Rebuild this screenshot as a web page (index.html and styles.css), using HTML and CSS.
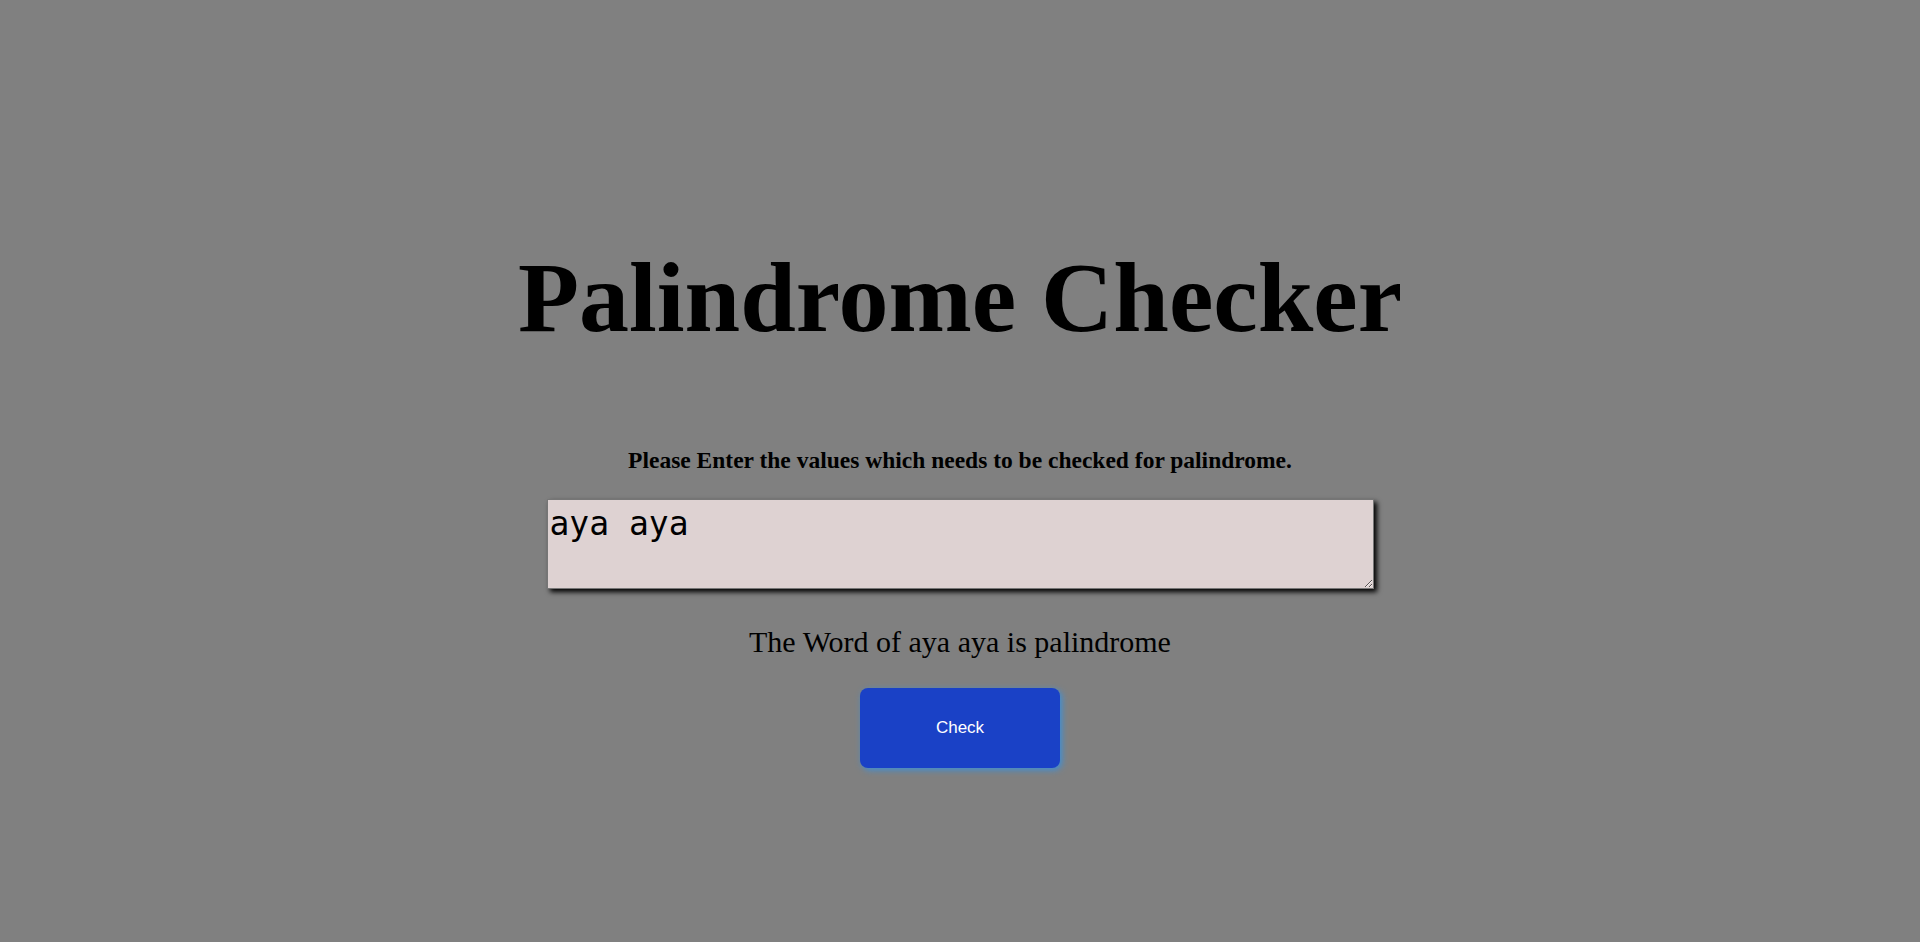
FILE: index.html
```html
<!DOCTYPE html>
<html>
<head>
<meta charset="utf-8">
<title>Palindrome Checker</title>
<link rel="stylesheet" href="styles.css">
</head>
<body>
<main class="page">
  <h1 class="title">Palindrome Checker</h1>
  <p class="prompt">Please Enter the values which needs to be checked for palindrome.</p>
  <textarea class="input">aya aya</textarea>
  <p class="result">The Word of aya aya is palindrome</p>
  <button class="check">Check</button>
</main>
</body>
</html>
```
FILE: styles.css
```css
html, body {
  margin: 0;
  height: 100%;
  background: #808080;
}
.page {
  display: flex;
  flex-direction: column;
  align-items: center;
  padding-top: 240px;
  font-family: "Liberation Serif", "Times New Roman", serif;
  color: #000;
}
.title {
  margin: 0;
  font-size: 100px;
  font-weight: bold;
  line-height: normal;
}
.prompt {
  margin: 92px 0 0;
  font-size: 23.5px;
  font-weight: bold;
  line-height: normal;
}
.input {
  margin-top: 25px;
  box-sizing: border-box;
  width: 827px;
  height: 90px;
  padding: 4px 2px 2px;
  border: 1px solid #767676;
  background: #ded2d2;
  font-family: "DejaVu Sans Mono", monospace;
  font-size: 33px;
  color: #000;
  box-shadow: 3px 3px 5px #000;
  resize: both;
}
.result {
  margin: 36px 0 0;
  font-size: 30px;
  line-height: normal;
}
.check {
  margin-top: 29px;
  width: 200px;
  height: 80px;
  border: none;
  border-radius: 8px;
  background: #1a41c6;
  color: #fff;
  font-family: "Liberation Sans", Arial, sans-serif;
  font-size: 17px;
  box-shadow: 2px 2px 6px #3c8fd8;
}
```
